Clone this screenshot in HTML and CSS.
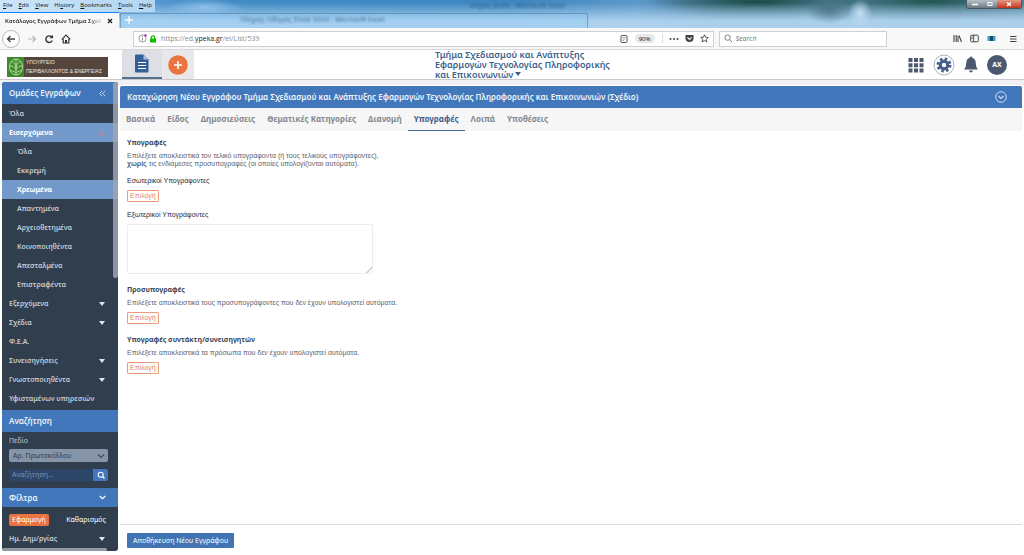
FILE: index.html
```html
<!DOCTYPE html>
<html lang="el">
<head>
<meta charset="utf-8">
<title>Κατάλογος Εγγράφων</title>
<link rel="stylesheet" href="styles.css">
</head>
<body>
<header class="window-top">
  <div class="glass-frame"></div>
  <div class="glass glass-one">Πλήρης Οδηγός ΣΗΔΕ XXXX - Microsoft Excel</div>
  <div class="glass glass-two">ehype_el.xls - Microsoft Excel</div>
  <nav class="menu-bar">
    <a href="#"><u>F</u>ile</a><a href="#"><u>E</u>dit</a><a href="#"><u>V</u>iew</a><a href="#">Hi<u>s</u>tory</a><a href="#"><u>B</u>ookmarks</a><a href="#"><u>T</u>ools</a><a href="#"><u>H</u>elp</a>
  </nav>
  <div class="window-buttons">
    <button aria-label="Minimize"><svg viewBox="0 0 8 8" width="8" height="8"><path d="M1 4.500h6" stroke="#fff" stroke-width="1.500"/></svg></button>
    <button aria-label="Maximize"><svg viewBox="0 0 8 8" width="8" height="8"><rect x="2" y="2.500" width="4" height="3" fill="none" stroke="#fff"/></svg></button>
    <button class="close-window" aria-label="Close"><svg viewBox="0 0 8 8" width="8" height="8"><path d="M2 2.500l4 3.500M6 2.500l-4 3.500" stroke="#fff" stroke-width="1.300"/></svg></button>
  </div>
  <div class="tab-strip">
    <div class="browser-tab"><span class="browser-tab-title">Κατάλογος Εγγράφων Τμήμα Σχεδ</span>
      <button aria-label="Close tab"><svg viewBox="0 0 6 6" width="6" height="6"><path d="M1 1l4 4M5 1L1 5" stroke="#222" stroke-width="1.300"/></svg></button></div>
    <button class="new-tab" aria-label="New tab"><svg viewBox="0 0 10 10" width="10" height="10"><path d="M5 1v8M1 5h8" stroke="#f4faff" stroke-width="1.400"/></svg></button>
  </div>
</header>

<div class="toolbar">
  <div class="nav-buttons">
    <button class="back" aria-label="Back"><svg viewBox="0 0 10 10" width="10" height="10"><path d="M9 5H1.500M4.500 2L1.500 5l3 3" fill="none" stroke="#444" stroke-width="1.300"/></svg></button>
    <button aria-label="Forward"><svg viewBox="0 0 10 10" width="10" height="10"><path d="M1 5h7.500M5.500 2l3 3-3 3" fill="none" stroke="#b5b5b5" stroke-width="1.200"/></svg></button>
    <button aria-label="Reload"><svg viewBox="0 0 10 10" width="10" height="10"><path d="M8 3.500A3.300 3.300 0 1 0 8.200 6.500" fill="none" stroke="#333" stroke-width="1.400"/><path d="M5.500 4.300H9V.8z" fill="#333"/></svg></button>
    <button aria-label="Home"><svg viewBox="0 0 10 10" width="10" height="10"><path d="M.8 5.400L5 1.200l4.200 4.200M2.200 5v4h5.600V5" fill="none" stroke="#333" stroke-width="1.200"/><path d="M4 6h2v3H4z" fill="#333"/></svg></button>
  </div>
  <div class="address">
    <svg viewBox="0 0 10 10" width="9" height="9"><circle cx="5" cy="5" r="4" fill="none" stroke="#777" stroke-width=".8"/><path d="M5 4.200v3.300M5 2.500v1" stroke="#777"/><circle cx="8.300" cy="1.700" r="1.400" fill="#8a3fb5"/></svg>
    <svg viewBox="0 0 8 8" width="8" height="8"><rect x="1" y="3.500" width="6" height="4" fill="#12bc00"/><path d="M2.300 4V2.500a1.700 1.700 0 0 1 3.400 0V4" fill="none" stroke="#12bc00" stroke-width="1.200"/></svg>
    <span class="url">https://ed.<b>ypeka.gr</b>/el/List/539</span>
    <svg viewBox="0 0 8 8" width="8" height="8"><rect x="1" y=".5" width="6" height="7" rx=".8" fill="none" stroke="#555"/><path d="M2.500 2.500h3M2.500 4h3M2.500 5.500h1.500" stroke="#777" stroke-width=".6"/></svg>
    <button class="zoom-level">90%</button>
    <div class="page-actions">
      <svg viewBox="0 0 10 4" width="10" height="4"><g fill="#444"><circle cx="1.500" cy="2" r="1"/><circle cx="5" cy="2" r="1"/><circle cx="8.500" cy="2" r="1"/></g></svg>
      <svg viewBox="0 0 10 10" width="9" height="9"><path d="M.5 1h9v3.500a4.500 4.500 0 0 1-9 0z" fill="#444"/><path d="M2.700 3.700L5 6l2.300-2.300" fill="none" stroke="#fff" stroke-width="1.200"/></svg>
      <svg viewBox="0 0 10 10" width="9" height="9"><path d="M5 .9l1.250 2.700 2.950.3L7 5.900l.65 2.900L5 7.300 2.350 8.800 3 5.900.8 3.900l2.950-.3z" fill="none" stroke="#444"/></svg>
    </div>
  </div>
  <label class="search-box">
    <svg viewBox="0 0 10 10" width="9" height="9"><circle cx="4" cy="4" r="3" fill="none" stroke="#666" stroke-width=".9"/><path d="M6.200 6.200L9 9" stroke="#666" stroke-width=".9"/></svg>
    <input type="search" placeholder="Search" aria-label="Search">
  </label>
  <div class="tool-icons">
    <svg viewBox="0 0 9 9" width="9" height="9"><path d="M1 1v7M3.200 1v7M5 2v6M6 1.500l2.500 6.500" stroke="#444" stroke-width="1.100"/></svg>
    <svg viewBox="0 0 9 9" width="9" height="9"><rect x=".7" y="1.200" width="7.600" height="6.600" rx="1" fill="none" stroke="#444"/><path d="M3.700 1v7M1.500 3h1.200M1.500 4.500h1.200" stroke="#444" stroke-width=".9"/></svg>
    <svg viewBox="0 0 9 9" width="9" height="9"><path d="M.5 2h8v5h-8z" fill="#37a5c4"/><path d="M3 2h3v5H3z" fill="#154b66"/></svg>
    <svg class="menu-icon" viewBox="0 0 8 8" width="8" height="8"><path d="M1 1.500h6.500M1 4h6.500M1 6.500h6.500" stroke="#444"/></svg>
  </div>
</div>

<header class="app-header">
  <div class="brand">
    <div class="logo">
      <svg viewBox="0 0 17 20" width="17" height="20"><rect width="17" height="20" fill="#3f8a2c"/><ellipse cx="9" cy="10" rx="6.500" ry="8" fill="none" stroke="#b7da9c"/><path d="M9 2v16M5 4.500c3 2 4 4 4 6M13 4.500c-3 2-4 4-4 6M3 9c3 0 5 1 6 4M15 9c-3 0-5 1-6 4M4 13.500l5 2 5-2" stroke="#b7da9c" fill="none" stroke-width=".9"/></svg>
      <span>ΥΠΟΥΡΓΕΙΟ<br>ΠΕΡΙΒΑΛΛΟΝΤΟΣ &amp; ΕΝΕΡΓΕΙΑΣ</span>
    </div>
  </div>
  <button class="doc-tab" aria-label="Έγγραφα"><svg viewBox="0 0 14 19" width="14" height="19"><path d="M0 1.500Q0 .5 1 .5h7.500L13.500 5.500v12q0 1-1 1H1q-1 0-1-1z" fill="#335f9b"/><path d="M8.500.5v5h5z" fill="#a8bedb"/><path d="M3 8.500h8M3 11.500h8M3 14.500h8" stroke="#fff" stroke-width="1.200"/></svg></button>
  <button class="add-tab" aria-label="Νέο"><svg viewBox="0 0 20 20" width="20" height="20"><circle cx="10" cy="10" r="9.800" fill="#ea7440"/><path d="M10 6v8M6 10h8" stroke="#fff" stroke-width="1.600"/></svg></button>
  <h1 class="department"><a href="#">Τμήμα Σχεδιασμού και Ανάπτυξης<br>Εφαρμογών Τεχνολογίας Πληροφορικής<br>και Επικοινωνιών<svg viewBox="0 0 6 4" width="6" height="4"><path d="M0 0h6L3 4z" fill="#3b5f8d"/></svg></a></h1>
  <div class="user-tools">
    <button aria-label="Εφαρμογές"><svg viewBox="0 0 16 16" width="16" height="16"><path d="M.5 1h4v4h-4zM6 1h4v4H6zM11.500 1h4v4h-4zM.5 6.300h4v4h-4zM6 6.300h4v4H6zM11.500 6.300h4v4h-4zM.5 11.600h4v4h-4zM6 11.600h4v4H6zM11.500 11.600h4v4h-4z" fill="#4b5870"/></svg></button>
    <button aria-label="Ρυθμίσεις"><svg viewBox="0 0 22 22" width="22" height="22"><circle cx="11" cy="11" r="10" fill="#fff" stroke="#aab5c6"/><circle cx="11" cy="11" r="6" fill="none" stroke="#47608a" stroke-width="3" stroke-dasharray="2.400 2.312"/><circle cx="11" cy="11" r="3.800" fill="none" stroke="#47608a" stroke-width="3.200"/></svg></button>
    <button aria-label="Ειδοποιήσεις"><svg viewBox="0 0 14 17" width="14" height="17"><path d="M7 .5q1.300 0 1.300 1.300 3.400 1 3.400 5Q11.700 11 14 13.500H0Q2.300 11 2.300 6.800q0-4 3.400-5Q5.700.5 7 .5zM5 14.500h4q-.4 2-2 2t-2-2z" fill="#4b5870"/></svg></button>
    <button class="avatar">AX</button>
  </div>
</header>

<div class="workspace">
  <aside class="sidebar">
    <div class="groups">
      <h2 class="side-title">Ομάδες Εγγράφων<svg viewBox="0 0 7 7" width="7" height="7"><path d="M3.300.7L.7 3.500l2.600 2.800M6.300.7L3.700 3.500l2.600 2.800" fill="none" stroke="#cfe0f5" stroke-width=".9"/></svg></h2>
      <nav class="side-list">
        <a href="#">Όλα</a>
        <a href="#" class="selected parent">Εισερχόμενα<svg viewBox="0 0 6 4" width="6" height="4"><path d="M0 4h6L3 0z" fill="#b58a92"/></svg></a>
        <a href="#" class="child">Όλα</a>
        <a href="#" class="child">Εκκρεμή</a>
        <a href="#" class="child selected">Χρεωμένα</a>
        <a href="#" class="child">Απαντημένα</a>
        <a href="#" class="child">Αρχειοθετημένα</a>
        <a href="#" class="child">Κοινοποιηθέντα</a>
        <a href="#" class="child">Απεσταλμένα</a>
        <a href="#" class="child">Επιστραφέντα</a>
        <a href="#" class="parent">Εξερχόμενα<svg viewBox="0 0 6 4" width="6" height="4"><path d="M0 0h6L3 4z" fill="#dfe6ee"/></svg></a>
        <a href="#" class="parent">Σχέδια<svg viewBox="0 0 6 4" width="6" height="4"><path d="M0 0h6L3 4z" fill="#dfe6ee"/></svg></a>
        <a href="#">Φ.Ε.Α.</a>
        <a href="#" class="parent">Συνεισηγήσεις<svg viewBox="0 0 6 4" width="6" height="4"><path d="M0 0h6L3 4z" fill="#dfe6ee"/></svg></a>
        <a href="#" class="parent">Γνωστοποιηθέντα<svg viewBox="0 0 6 4" width="6" height="4"><path d="M0 0h6L3 4z" fill="#dfe6ee"/></svg></a>
        <a href="#">Υφισταμένων υπηρεσιών</a>
      </nav>
      <div class="scroll-thumb"></div>
    </div>
    <h2 class="side-title">Αναζήτηση</h2>
    <form class="side-search">
      <label for="field">Πεδίο</label>
      <div class="select-wrap"><select id="field"><option>Αρ. Πρωτοκόλλου</option></select><svg viewBox="0 0 8 6" width="8" height="6"><path d="M1 1.500l3 3 3-3" fill="none" stroke="#3b4f66" stroke-width="1.200"/></svg></div>
      <div class="find"><input type="text" placeholder="Αναζήτηση..." aria-label="Αναζήτηση"><button type="button" aria-label="Εύρεση"><svg viewBox="0 0 8 8" width="8" height="8"><circle cx="3.700" cy="3.700" r="2.500" fill="none" stroke="#fff" stroke-width="1.100"/><path d="M5.500 5.500L7.500 7.500" stroke="#fff" stroke-width="1.200"/></svg></button></div>
    </form>
    <h2 class="side-title filters-title">Φίλτρα<svg viewBox="0 0 7 5" width="7" height="5"><path d="M.7 1l2.800 2.600L6.300 1" fill="none" stroke="#fff" stroke-width="1.200"/></svg></h2>
    <div class="filter-actions"><button class="apply">Εφαρμογή</button><button class="clear">Καθαρισμός</button></div>
    <nav class="side-list"><a href="#" class="parent">Ημ. Δημ/ργίας<svg viewBox="0 0 6 4" width="6" height="4"><path d="M0 0h6L3 4z" fill="#dfe6ee"/></svg></a></nav>
    <div class="side-hscroll"></div>
  </aside>

  <main class="panel">
    <h2 class="panel-title">Καταχώρηση Νέου Εγγράφου Τμήμα Σχεδιασμού και Ανάπτυξης Εφαρμογών Τεχνολογίας Πληροφορικής και Επικοινωνιών (Σχέδιο)
      <button aria-label="Σύμπτυξη"><svg viewBox="0 0 12 12" width="12" height="12"><circle cx="6" cy="6" r="5.300" fill="none" stroke="#c9dcf5"/><path d="M3.500 5L6 7.500 8.500 5" fill="none" stroke="#c9dcf5" stroke-width="1.200"/></svg></button></h2>
    <nav class="tabs">
      <a href="#">Βασικά</a><a href="#">Είδος</a><a href="#">Δημοσιεύσεις</a><a href="#">Θεματικές Κατηγορίες</a><a href="#">Διανομή</a><a href="#" class="current">Υπογραφές</a><a href="#">Λοιπά</a><a href="#">Υποθέσεις</a>
    </nav>
    <form class="content">
      <section>
        <h3>Υπογραφές</h3>
        <p>Επιλέξετε αποκλειστικά τον τελικό υπογράφοντα (ή τους τελικούς υπογράφοντες),<br><strong>χωρίς</strong> τις ενδιάμεσες προσυπογραφές (οι οποίες υπολογίζονται αυτόματα).</p>
      </section>
      <section>
        <h4>Εσωτερικοί Υπογράφοντες</h4>
        <button type="button" class="pick">Επιλογή</button>
      </section>
      <section>
        <label for="external">Εξωτερικοί Υπογράφοντες</label>
        <textarea id="external"></textarea>
      </section>
      <section class="topic">
        <h3>Προσυπογραφές</h3>
        <p>Επιλέξετε αποκλειστικά τους προσυπογράφοντες που δεν έχουν υπολογιστεί αυτόματα.</p>
        <button type="button" class="pick">Επιλογή</button>
      </section>
      <section class="topic">
        <h3>Υπογραφές συντάκτη/συνεισηγητών</h3>
        <p>Επιλέξετε αποκλειστικά τα πρόσωπα που δεν έχουν υπολογιστεί αυτόματα.</p>
        <button type="button" class="pick">Επιλογή</button>
      </section>
    </form>
    <footer class="actions"><button class="save">Αποθήκευση Νέου Εγγράφου</button></footer>
  </main>
</div>
</body>
</html>
```
FILE: styles.css
```css
* { box-sizing: border-box; }
body {
  margin: 0;
  min-height: 100vh;
  display: flex;
  flex-direction: column;
  background: #fff;
  color: #3c4858;
  font-family: "Noto Sans", "Open Sans", sans-serif;
  font-size: 7px;
  line-height: 8px;
}
h1, h2, h3, h4, p { margin: 0; }
a { color: inherit; text-decoration: none; }
button {
  padding: 0;
  border: 0;
  background: none;
  color: inherit;
  font: inherit;
}
input, select, textarea { font: inherit; color: inherit; outline: 0; }
svg { display: block; flex: none; }

/* Window frame */
.window-top {
  position: relative;
  overflow: hidden;
  background:
    radial-gradient(ellipse 40px 9px at 20% 8px, #8fc0e8, transparent),
    radial-gradient(ellipse 12px 14px at 84% 13px, #c4def3, transparent),
    radial-gradient(ellipse 24px 16px at 81% 8px, #4d7589, transparent),
    linear-gradient(to bottom, transparent 10%, rgba(176, 212, 240, .95) 75%),
    radial-gradient(ellipse 110px 18px at 74% 2px, #1b4c48, transparent),
    radial-gradient(ellipse 120px 20px at 91% 2px, #235654, transparent),
    linear-gradient(to right, #78b4e4, #438bc4 22%, #3d86bf 50%, #5b98c8 62%, #4b7f9f 70%, #5d8ba6 100%);
}
.menu-bar {
  position: relative;
  width: max-content;
  display: flex;
  gap: 6px;
  height: 12px;
  padding: 1px 3px;
  background: linear-gradient(to right, #cde5f8, #b2d6f2);
  color: #111;
  font-family: "Open Sans", sans-serif;
  font-size: 6px;
}
.tab-strip { position: relative; display: flex; height: 16px; }
.browser-tab {
  width: 119px;
  display: flex;
  align-items: center;
  justify-content: space-between;
  padding: 0 6px 0 5px;
  border-top: 1px solid #0a84ff;
  background: #f7f8fa;
  color: #111;
  font-size: 6px;
  font-weight: 500;
}
.browser-tab-title {
  width: 98px;
  overflow: hidden;
  white-space: nowrap;
  mask-image: linear-gradient(to right, #000 85%, transparent);
}
.new-tab { padding: 0 5px; }
.glass {
  position: absolute;
  color: #1d466b;
  font-size: 7px;
  filter: blur(1px);
  opacity: .7;
}
.glass-one { left: 240px; top: 16px; }
.glass-two { left: 470px; top: 2px; }
.glass-frame {
  position: absolute;
  left: 120px;
  top: 13px;
  width: 468px;
  height: 20px;
  border: 1px solid rgba(40, 90, 130, .4);
  background: rgba(150, 205, 245, .35);
}
.window-buttons {
  position: absolute;
  right: 2px;
  top: 0;
  display: flex;
  height: 9px;
  border: 1px solid #4b5862;
  border-top: 0;
  border-radius: 0 0 3px 3px;
  overflow: hidden;
}
.window-buttons button {
  width: 15px;
  display: grid;
  place-items: center;
  background: linear-gradient(#b6bfc5, #6d7a83);
}
.window-buttons .close-window { width: 24px; background: linear-gradient(#e29a86, #c5301c); }

/* Browser toolbar */
.toolbar {
  display: flex;
  align-items: center;
  height: 22px;
  padding: 0 7px 0 2px;
  border-bottom: 1px solid #d8d8da;
  background: #f8f8f9;
}
.nav-buttons {
  width: 131px;
  display: flex;
  align-items: center;
  gap: 7px;
}
.back {
  width: 18px;
  height: 18px;
  display: grid;
  place-items: center;
  border: 1px solid #b9b9bb;
  border-radius: 50%;
  background: #fff;
}
.address, .search-box {
  display: flex;
  align-items: center;
  height: 16px;
  padding: 0 4px;
  border: 1px solid #cfcfd1;
  background: #fff;
}
.address { flex: 587; gap: 2px; }
.url {
  flex: 1;
  padding-left: 2px;
  color: #8a8a8c;
  font-family: "Open Sans", sans-serif;
}
.url b { color: #222; font-weight: 400; }
.zoom-level {
  width: 20px;
  height: 9px;
  margin: 0 5px;
  border-radius: 5px;
  background: #e8e8ea;
  color: #222;
  font-size: 6px;
}
.page-actions {
  display: flex;
  align-items: center;
  gap: 6px;
  padding-left: 6px;
  border-left: 1px solid #ddd;
}
.search-box { flex: 163; gap: 3px; margin-left: 5px; }
.search-box input {
  width: 100%;
  padding: 0;
  border: 0;
  background: none;
  font-style: italic;
}
.search-box input::placeholder { color: #777; }
.tool-icons { display: flex; align-items: center; gap: 8px; margin-left: 66px; }
.menu-icon { margin-left: 5px; }

/* Application header */
.app-header {
  position: relative;
  display: flex;
  height: 30px;
  border-bottom: 1px solid #c9c9cd;
}
.brand { width: 122px; padding: 7px; }
.logo {
  width: 101px;
  height: 20px;
  display: flex;
  background: #54463d;
  color: #eee9e2;
  font-family: "Liberation Sans", sans-serif;
  font-size: 5px;
  line-height: 9px;
  white-space: nowrap;
}
.logo span { padding: 1px 2px; }
.doc-tab, .add-tab {
  width: 40px;
  display: grid;
  place-items: center;
  background: #e8e8eb;
}
.doc-tab { border-bottom: 2px solid #55708f; background: #dedfe4; }
.add-tab { width: 32px; }
.department {
  margin-left: 241px;
  color: #3b5f8d;
  font-size: 9px;
  font-weight: 600;
  line-height: 10px;
  white-space: nowrap;
}
.department svg { display: inline-block; margin-left: 2px; vertical-align: 2px; }
.user-tools {
  display: flex;
  align-items: center;
  gap: 9px;
  margin-left: auto;
  padding-right: 17px;
}
.avatar {
  width: 20px;
  height: 20px;
  border-radius: 50%;
  background: #4b5870;
  color: #fff;
  font-weight: 700;
}

/* Sidebar */
.workspace {
  flex: 1;
  display: flex;
  gap: 2px;
  padding-left: 2px;
  background: linear-gradient(#f0f0f2 5px, #fff 5px);
}
.sidebar {
  width: 116px;
  margin: 2px 0 4px;
  overflow: hidden;
  border-radius: 3px;
  background: #303e4e;
  color: #c3ccd6;
  font-size: 7px;
}
.groups { position: relative; padding-bottom: 2px; }
.side-title {
  display: flex;
  align-items: center;
  justify-content: space-between;
  height: 22px;
  padding: 0 12px 0 7px;
  background: #4278bb;
  color: #e8f0fa;
  font-size: 8px;
  font-weight: 600;
}
.side-list { display: flex; flex-direction: column; }
.side-list a {
  display: flex;
  align-items: center;
  justify-content: space-between;
  height: 19px;
  padding: 0 13px 0 7px;
  font-weight: 600;
}
.side-list .child { padding-left: 15px; }
.side-list .selected { background: #7299c9; color: #fff; font-weight: 700; }
.scroll-thumb {
  position: absolute;
  top: 0;
  right: 0;
  width: 5px;
  height: 196px;
  border-radius: 3px;
  background: rgba(160, 165, 175, .85);
}
.side-search { padding: 5px 10px 7px 7px; }
.select-wrap { display: grid; align-items: center; margin: 4px 0 7px; }
.select-wrap > * { grid-area: 1 / 1; }
.select-wrap svg { justify-self: end; margin-right: 3px; }
.select-wrap select {
  appearance: none;
  width: 100%;
  height: 13px;
  padding: 0 4px;
  border: 0;
  border-radius: 2px;
  background: #8594a6;
  color: #303e4e;
}
.find { display: flex; height: 12px; }
.find input {
  flex: 1;
  min-width: 0;
  padding: 0 3px;
  border: 0;
  background: #2c4568;
}
.find input::placeholder { color: #8091a8; }
.find button {
  width: 15px;
  display: grid;
  place-items: center;
  border-radius: 0 2px 2px 0;
  background: #4278bb;
}
.filters-title { height: 19px; }
.filter-actions {
  display: flex;
  justify-content: space-between;
  padding: 7px 12px 3px 7px;
}
.apply {
  height: 12px;
  padding: 0 3px;
  border-radius: 2px;
  background: #ea7440;
  color: #fff;
}
.clear { color: #fff; }
.side-hscroll {
  width: 105px;
  height: 3px;
  border-radius: 2px;
  background: #929aa4;
}

/* Main panel */
.panel {
  flex: 1;
  min-width: 0;
  display: flex;
  flex-direction: column;
  margin: 6px 2px 0 0;
}
.panel-title {
  display: flex;
  align-items: center;
  justify-content: space-between;
  height: 22px;
  padding: 0 15px 0 7px;
  border-radius: 2px 2px 0 0;
  background: #4278bb;
  color: #f0f5fb;
  font-size: 8px;
  font-weight: 600;
}
.tabs {
  display: flex;
  height: 23px;
  background: #f6f6f7;
  color: #85888d;
  font-size: 8px;
  font-weight: 700;
  line-height: 22px;
}
.tabs a { padding: 0 6px; }
.tabs .current { border-bottom: 1px solid #45699a; color: #3b5f8d; }
.content {
  flex: 1;
  display: flex;
  flex-direction: column;
  gap: 9px;
  padding: 8px 7px;
}
.content section { display: flex; flex-direction: column; align-items: flex-start; gap: 5px; }
.content .topic { padding-top: 3px; }
.content h3 { font-size: 7px; font-weight: 700; }
.content h4, .content label, .content p, .pick { font-family: "Liberation Sans", sans-serif; font-size: 7px; }
.content h4, .content label { font-weight: 500; color: #1f2a38; }
.content p { color: #59626f; }
.pick {
  height: 12px;
  padding: 0 2px;
  border: 1px solid #ec9c7b;
  border-radius: 1px;
  color: #e08560;
  line-height: 10px;
}
.content textarea {
  width: 246px;
  height: 50px;
  border: 1px solid #ebecee;
  border-radius: 2px;
}
.content textarea::-webkit-resizer {
  background: linear-gradient(135deg, transparent 78%, #d0d2d6 78% 84%, transparent 84%);
}
.actions { height: 31px; padding: 8px 7px; border-top: 1px solid #dcdde0; }
.save {
  height: 15px;
  padding: 0 6px;
  border-radius: 1px;
  background: #4274b3;
  color: #fff;
}
```
